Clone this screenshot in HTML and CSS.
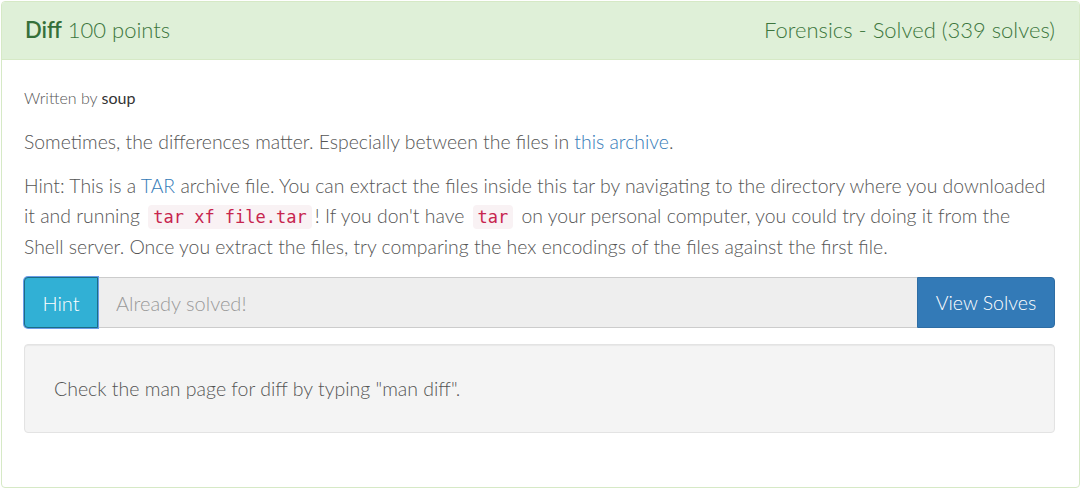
FILE: index.html
```html
<!DOCTYPE html>
<html>
<head>
<meta charset="utf-8">
<link rel="stylesheet" href="styles.css">
</head>
<body>
<div class="panel">
  <div class="panel-heading">
    <div class="title"><b>Diff</b> 100 points</div>
    <div class="meta">Forensics - Solved (339 solves)</div>
  </div>
  <div class="panel-body">
    <p class="author">Written by <span class="name">soup</span></p>
    <p>Sometimes, the differences matter. Especially between the files in <a href="#">this archive</a>.</p>
    <p class="hint-text">Hint: This is a <a href="#">TAR</a> archive file. You can extract the files inside this tar by navigating to the directory where you downloaded it and running <code>tar xf file.tar</code>! If you don't have <code>tar</code> on your personal computer, you could try doing it from the Shell server. Once you extract the files, try comparing the hex encodings of the files against the first file.</p>
    <div class="input-group">
      <button class="btn btn-hint">Hint</button>
      <input class="field" type="text" placeholder="Already solved!" disabled>
      <button class="btn btn-solves">View Solves</button>
    </div>
    <div class="well">Check the man page for diff by typing "man diff".</div>
  </div>
</div>
</body>
</html>
```
FILE: styles.css
```css
* { box-sizing: border-box; }
body {
  margin: 0;
  padding: 1px 1px 0 1px;
  background: #fff;
  font-family: "Lato", "Open Sans", sans-serif;
  font-weight: 300;
  color: #555;
  font-size: 19.4px;
}
.panel {
  border: 1px solid #d6e9c6;
  border-radius: 4px;
  height: 487px;
  background: #fff;
}
.panel-heading {
  background: #dff0d8;
  color: #3c763d;
  border-bottom: 1px solid #d6e9c6;
  height: 58px;
  padding: 0 24px 2px 23px;
  display: flex;
  align-items: center;
  justify-content: space-between;
  font-size: 22px;
  border-radius: 3px 3px 0 0;
}
.panel-heading b { font-weight: 600; color: #35703a; }
.panel-body {
  padding: 28px 24px 0 22px;
}
p { margin: 0 0 14px 0; line-height: 30px; }
.hint-text { margin-right: 2px; }
.author { font-size: 16px; line-height: 20px; margin-bottom: 19px; }
.author .name { color: #333; font-weight: 400; }
a { color: #337ab7; text-decoration: none; }
code {
  font-family: "DejaVu Sans Mono", monospace;
  font-size: 17px;
  color: #c7254e;
  background: #f9f2f4;
  border-radius: 4px;
  padding: 2px 5px;
  margin: 0 3px;
}
.input-group {
  display: flex;
  height: 51px;
  margin-top: 15px;
}
.btn {
  font-family: inherit;
  font-weight: 300;
  font-size: 20px;
  color: #fff;
  border: 1px solid transparent;
}
.btn-hint {
  width: 74px;
  background: #31b0d5;
  border-color: #1b6d85;
  border-radius: 4px 0 0 4px;
  box-shadow: 0 0 0 1px #6a9de8;
  position: relative;
}
.field {
  flex: 1;
  background: #eee;
  border: 1px solid #ccc;
  border-left: 0;
  border-right: 0;
  font-family: inherit;
  font-weight: 300;
  font-size: 20px;
  padding: 0 18px;
}
.field::placeholder { color: #999; }
.btn-solves {
  width: 138px;
  background: #337ab7;
  border-color: #2e6da4;
  border-radius: 0 4px 4px 0;
  font-size: 19.5px;
}
.well {
  margin-top: 16px;
  height: 89px;
  background: #f4f4f4;
  border: 1px solid #e3e3e3;
  border-radius: 4px;
  box-shadow: inset 0 1px 1px rgba(0,0,0,.05);
  padding: 0 29px;
  display: flex;
  align-items: center;
  font-size: 19.5px;
}
```
